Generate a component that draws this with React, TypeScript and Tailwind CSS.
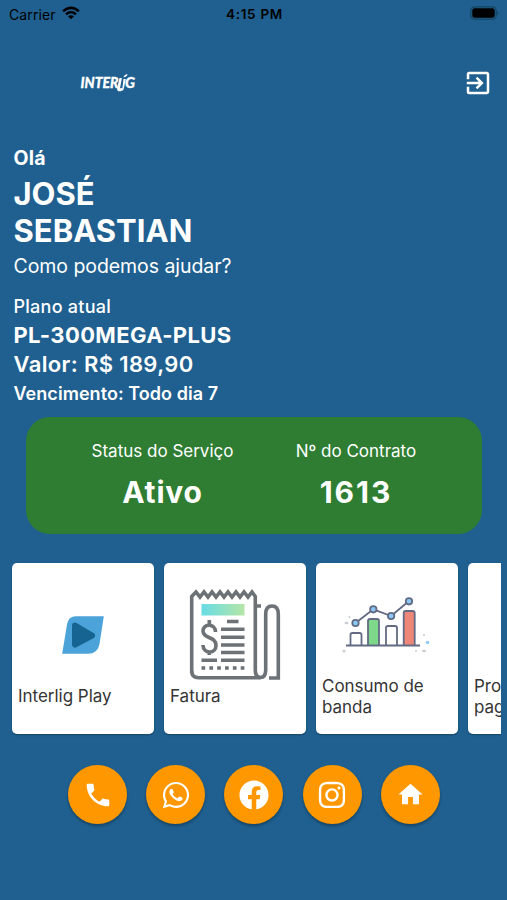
import type { ReactNode } from "react";
import { MdExitToApp, MdPhone, MdHome } from "react-icons/md";
import { FaWhatsapp, FaFacebook, FaInstagram } from "react-icons/fa";

function StatusBar() {
  return (
    <div className="flex h-7 items-center justify-between pl-[9px] pr-[7px] text-black">
      <div className="flex w-[120px] items-center gap-[6px]">
        <span className="text-[14px] tracking-[0.1px]">Carrier</span>
        <svg className="mb-[2px] h-[14px] w-[18px]" viewBox="0 0 18 14">
          <path d="M0.3 4.500C5.400-.7 12.600-.7 17.700 4.500L15.900 6.300C11.900 2.300 6.100 2.300 2.100 6.300Z" />
          <path d="M3.200 7.500C6.600 4.200 11.400 4.200 14.800 7.500L13.100 9.200C10.700 6.900 7.300 6.900 4.900 9.200Z" />
          <path d="M6 10.300C7.700 8.800 10.300 8.800 12 10.300L9 13.300Z" />
        </svg>
      </div>
      <span className="text-[13.500px] font-semibold tracking-[0.700px]">4:15 PM</span>
      <div className="flex w-[120px] justify-end">
        <svg className="mb-[2px] h-[14px] w-[30px]" viewBox="0 0 30 14">
          <rect x="0.8" y="0.8" width="25.4" height="12.4" rx="3.8" fill="none" stroke="#15445f" strokeWidth="1.2" />
          <rect x="2.3" y="2.3" width="22.4" height="9.4" rx="2.3" />
          <path d="M27.5 5v4q2-2 0-4z" fill="#15445f" />
        </svg>
      </div>
    </div>
  );
}

function Logo() {
  return (
    <svg className="h-[24px] w-[58px]" viewBox="0 0 58 24" fill="#fff">
      <g fontFamily="Lato" fontWeight="900" fontStyle="italic" fontSize="14.5" stroke="#fff" strokeWidth="0.3">
        <text x="1.5" y="17" textLength="38" lengthAdjust="spacingAndGlyphs">INTER</text>
        <text x="46" y="17" textLength="10" lengthAdjust="spacingAndGlyphs">G</text>
      </g>
      <path d="M40.500 7h2.400l-1.900 10.200 2.300-.2-.8 3q-5 1-4.300-2.600z" />
      <path d="M44.500 8h2.300l-1.900 9.500q-.3 2-2.500 2.500l1-3z" />
      <path d="M44.500 6.500q.5-2.800 4-3.500-.3 2.700-4 3.500z" />
    </svg>
  );
}

function PlayArt() {
  return (
    <svg className="h-[42px] w-[46px]" viewBox="0 0 46 42">
      <path d="M2.200 39.800L7 10.500Q8.500 2.300 16 2.300H43.800L39.500 30Q37.800 39.800 28 39.800Z" fill="#4ba3d9" />
      <path d="M15 11.500L32 21.500L15 30.500Z" fill="#156492" stroke="#156492" strokeWidth="6" strokeLinejoin="round" />
    </svg>
  );
}

function InvoiceArt() {
  return (
    <svg className="h-[92px] w-[92px]" viewBox="0 0 92 92" fill="none" stroke="#6d7276" strokeWidth="3.6">
      <defs>
        <linearGradient id="invoiceBand">
          <stop stopColor="#67dce6" />
          <stop offset="1" stopColor="#b5e6a6" />
        </linearGradient>
      </defs>
      <path d="M2.700 84V7.500L7 3l4 5 4-5 4 5 4-5 4 5 4-5 4 5 4-5 4 5 4-5 4 5 4-5 4 5 4-5L66.300 7.500V81Q66.300 88.500 71.500 88.500Q76.700 88.500 76.700 81V25Q76.700 17 83 17Q89.300 17 89.300 25V89H80" />
      <path d="M2.700 82Q2.700 88.700 9.500 88.700H71.500M65.500 17H72" />
      <rect x="12.500" y="15" width="43" height="11.5" fill="url(#invoiceBand)" stroke="none" />
      <path d="M38 32.500H49.500M32 40.300H55.500M32 48.300H55.500M32 56H55.500M32 63.500H55.500M12.500 71.300H28M32 71.300H55.500" />
      <path d="M12.500 79H55.500" strokeDasharray="3.7 4.14" />
      <path d="M26.500 43C26.500 34 14 34 14 42C14 50 27 47 27 56.500C27 65.500 14 65 14 56M20.300 31V36.500M20.300 62V66" />
    </svg>
  );
}

function ChartArt() {
  return (
    <svg className="h-[60px] w-[90px] overflow-visible" viewBox="0 0 90 60" fill="none" stroke="#626b83" strokeWidth="1.8">
      <path d="M5.500 54V44q0-2 2-2h7q2 0 2 2V54M41 54V37q0-2 2-2h7q2 0 2 2V54" />
      <path d="M23 54V30q0-2 2-2h7q2 0 2 2V54" fill="#7dd889" />
      <path d="M58.700 54V22q0-2 2-2h7q2 0 2 2V54" fill="#ee8777" />
      <path d="M1 54.500H75" />
      <path d="M10.500 32L28.300 18.300L46.100 25L64 10" />
      <g fill="#8bc8f5">
        <circle cx="10.5" cy="32" r="3.2" />
        <circle cx="28.3" cy="18.300" r="3.2" />
        <circle cx="46.1" cy="25" r="3.2" />
        <circle cx="64" cy="10.300" r="3.2" />
      </g>
      <g stroke="none" fill="#c9ccd3">
        <ellipse cx="1.500" cy="32" rx="2" ry="1.3" />
        <circle cx="4.500" cy="26" r="1" />
        <circle cx="-1" cy="60" r="1.5" />
        <circle cx="79" cy="44" r="1.1" />
        <circle cx="82.500" cy="51.500" r="1.8" fill="#92c9f5" />
        <circle cx="71" cy="60" r="1" />
        <ellipse cx="79" cy="60" rx="2" ry="1.3" />
      </g>
    </svg>
  );
}

function Card({ art, children }: { art?: ReactNode; children: ReactNode }) {
  return (
    <div className="flex h-[170.500px] w-[142px] shrink-0 flex-col rounded-[5px] bg-white shadow-[0_1px_2px_rgba(0,0,0,0.3)]">
      <div className="flex h-[106px] shrink-0 items-end justify-center">{art}</div>
      <div className="flex h-[54px] flex-col justify-center whitespace-nowrap pl-[6px] pt-[1px] text-[17px] leading-[20.500px] tracking-[-0.020px] text-[#353535]">{children}</div>
    </div>
  );
}

const actions = [
  { name: "phone", icon: <MdPhone size={30} /> },
  { name: "whatsapp", icon: <FaWhatsapp size={30} /> },
  { name: "facebook", icon: <FaFacebook size={30} /> },
  { name: "instagram", icon: <FaInstagram size={30} /> },
  { name: "home", icon: <MdHome size={29} /> },
];

export default function App() {
  return (
    <main className="h-[900px] w-[507px] overflow-hidden bg-[#1f6090] font-['Inter',sans-serif] text-white">
      <StatusBar />
      <header className="flex h-[109px] items-center justify-between pl-[79px] pr-[14px]">
        <Logo />
        <button aria-label="Sair"><MdExitToApp size={30} /></button>
      </header>
      <section className="flex h-[280px] flex-col whitespace-nowrap pl-[13.500px] pt-[8px]">
        <p className="h-[26px] text-[19.500px] font-bold leading-[26px] tracking-[0.200px]">Olá</p>
        <h1 className="mt-[5px] text-[31px] font-bold leading-[36.500px]">JOSÉ<br />SEBASTIAN</h1>
        <p className="h-[34px] text-[19.500px] leading-[34px] tracking-[-0.060px]">Como podemos ajudar?</p>
        <p className="mt-[11px] h-[26px] text-[18px] font-medium leading-[26px] tracking-[0.250px]">Plano atual</p>
        <p className="h-[30px] text-[22px] font-bold leading-[30px] tracking-[0.370px]">PL-300MEGA-PLUS</p>
        <p className="h-[29px] text-[22px] font-semibold leading-[29px] tracking-[0.370px]">Valor: R$ 189,90</p>
        <p className="h-[29px] text-[18px] font-semibold leading-[29px] tracking-[0.050px]">Vencimento: Todo dia 7</p>
      </section>
      <section className="ml-[26px] flex h-[117px] w-[456px] justify-center rounded-[24px] bg-[#2f7d32] pt-[21px]">
        <div className="flex w-[207px] flex-col items-center pl-[24px]">
          <span className="text-[17px] leading-[26px]">Status do Serviço</span>
          <strong className="mt-[8px] text-[30px] font-bold leading-[40px] tracking-[0.800px]">Ativo</strong>
        </div>
        <div className="flex w-[207px] flex-col items-center pr-[3px]">
          <span className="text-[17px] leading-[26px]">Nº do Contrato</span>
          <strong className="mt-[8px] text-[30px] font-bold leading-[40px] tracking-[2px]">1613</strong>
        </div>
      </section>
      <section className="ml-[6px] mt-[23px] flex h-[185px] w-[495px] gap-[10px] overflow-hidden pl-[6px] pt-[6px]">
        <Card art={<div className="mb-[13px]"><PlayArt /></div>}>Interlig Play</Card>
        <Card art={<div className="-mb-[12px]"><InvoiceArt /></div>}>Fatura</Card>
        <Card art={<div className="mb-[18px] ml-[6px]"><ChartArt /></div>}>Consumo de<br />banda</Card>
        <Card>Promessa de<br />pagamento</Card>
      </section>
      <nav className="mt-[23px] flex gap-[19.200px] pl-[68px]">
        {actions.map((action) => (
          <button key={action.name} aria-label={action.name} className="flex size-[59px] items-center justify-center rounded-full bg-[#ff9800] shadow-[0_2px_3px_rgba(0,0,0,0.3)]">{action.icon}</button>
        ))}
      </nav>
    </main>
  );
}
